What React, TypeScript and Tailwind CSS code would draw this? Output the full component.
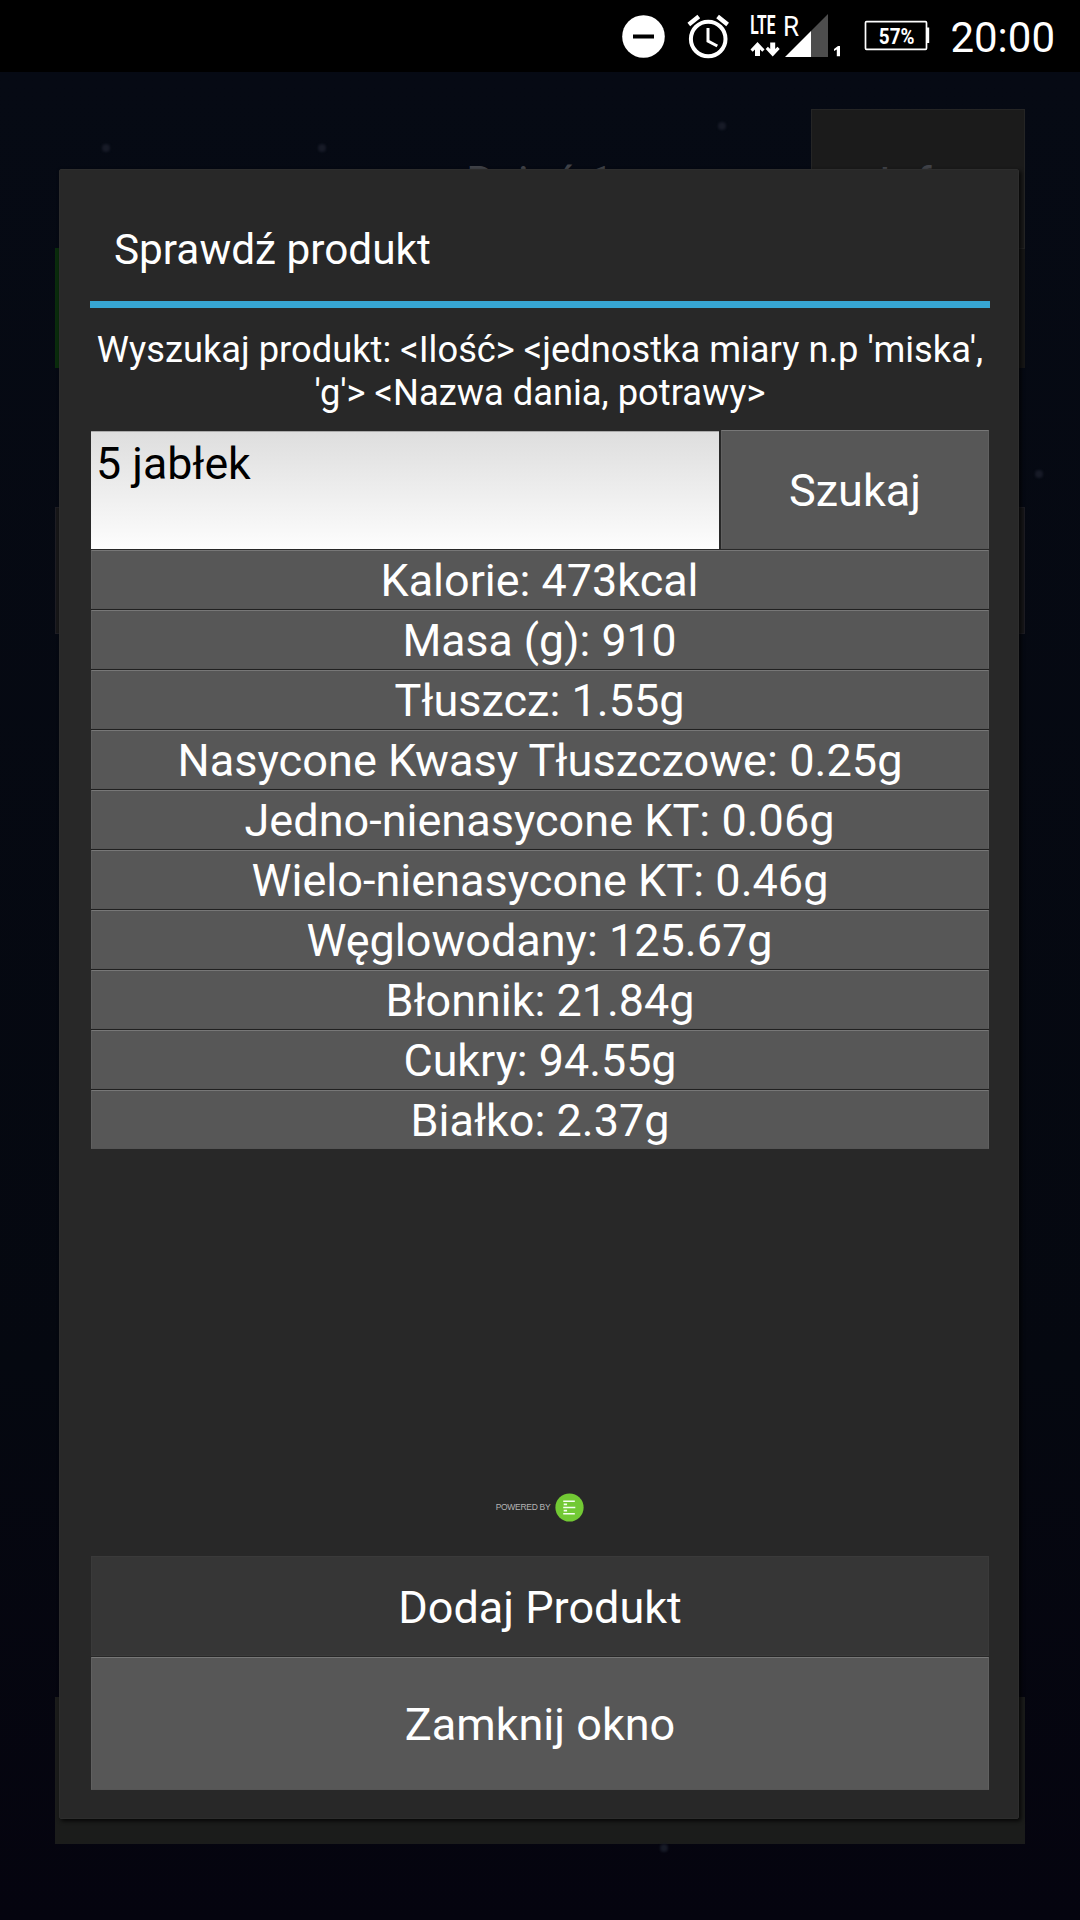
const nutrients = [
  { text: "Kalorie: 473kcal", w: 318 },
  { text: "Masa (g): 910", w: 274 },
  { text: "Tłuszcz: 1.55g", w: 290 },
  { text: "Nasycone Kwasy Tłuszczowe: 0.25g", w: 725 },
  { text: "Jedno-nienasycone KT: 0.06g", w: 590 },
  { text: "Wielo-nienasycone KT: 0.46g", w: 577 },
  { text: "Węglowodany: 125.67g", w: 466 },
  { text: "Błonnik: 21.84g", w: 309 },
  { text: "Cukry: 94.55g", w: 273 },
  { text: "Białko: 2.37g", w: 259 },
];

function StatusBar() {
  return (
    <header className="flex h-[72px] items-start justify-end bg-black pr-[25px] text-white">
      <svg className="mr-[21px] h-[72px] w-[44px] shrink-0" viewBox="621 0 44 72">
        <circle cx="643.5" cy="36.5" r="21.3" fill="#fff" />
        <rect x="633" y="34.5" width="21" height="4" fill="#000" />
      </svg>
      <svg className="mr-[20px] h-[72px] w-[44px] shrink-0" viewBox="686 0 44 72" fill="none" stroke="#fff">
        <circle cx="708.2" cy="39" r="17.3" strokeWidth="4" />
        <path d="M688.8 24.5l10-8M727.6 24.5l-10-8" strokeWidth="4.4" />
        <path d="M708 28v13l9.3 5" strokeWidth="3" />
      </svg>
      <svg className="mr-[22px] h-[72px] w-[92px] shrink-0" viewBox="750 0 92 72" fill="#fff">
        <text transform="translate(750.3 33.7) scale(0.6 1)" fontFamily="Roboto" fontWeight="700" fontSize="26">LTE</text>
        <text transform="translate(783 35.7) scale(0.95 1)" fontFamily="Roboto" fontWeight="400" fontSize="27.5">R</text>
        <path d="M757.5 42l7 7.5-2.2 2.2-2.3-2.2v6.5h-5v-6.5l-2.3 2.2-2.2-2.2z" />
        <path d="M772.7 56.5l-7-7.5 2.2-2.2 2.3 2.2v-6.5h5v6.5l2.3-2.2 2.2 2.2z" />
        <path d="M811 31l17-17v43h-17z" fill="#4d4d4d" />
        <path d="M785 57l26-26v26z" />
        <path d="M834 49l4-3h2v10.3h-3.2V49.5l-2.8 1.6z" />
      </svg>
      <svg className="mr-[20px] h-[72px] w-[66px] shrink-0" viewBox="864 0 66 72" fill="#fff">
        <rect x="865.5" y="21.7" width="61" height="27.6" rx="1" fill="none" stroke="#fff" strokeWidth="1.7" />
        <path d="M926.5 27.5h2.7v15.5h-2.7z" />
        <text transform="translate(878.8 43.7) scale(0.84 1)" fontFamily="Roboto" fontWeight="700" fontSize="22.5">57%</text>
      </svg>
      <span className="mt-[13px] text-[42px] leading-[50px]">20:00</span>
    </header>
  );
}

function DimmedPage() {
  return (
    <main className="flex h-[1848px] flex-col bg-linear-to-b from-[#060a14] via-[#050810] via-70% to-[#05040f] px-[55px] pt-[37px] text-[45px] text-[#404248]">
      <div className="grid h-[139px] grid-cols-[214px_1fr_214px]">
        <span />
        <span className="pt-[47px] text-center leading-[54px]">Dzień 1</span>
        <span className="border border-b-0 border-[#252525] bg-[#1b1b1b] pt-[47px] text-center leading-[54px]">Info</span>
      </div>
      <div className="flex h-[120px] justify-between">
        <span className="w-1/2 bg-[#0a2c0c]" />
        <span className="w-1/2 border-t border-[#252525] bg-[#171717]" />
      </div>
      <div className="mt-[139px] h-[127px] border border-[#1e1d23] bg-[#171719]" />
      <div className="mt-[1063px] h-[147px] bg-[#1b1c1b]" />
    </main>
  );
}

function Star({ className }: { className: string }) {
  return <i className={`absolute size-[8px] rounded-full bg-[#171b27] blur-[1px] ${className}`} />;
}

/** Single line stretched to a fixed advance width, centred in its parent. */
function Label({ text, w, h = 58 }: { text: string; w: number; h?: number }) {
  return (
    <svg width={w} height={h} className="overflow-visible" fill="currentColor">
      <text x="-0.5" y={h / 2 + 16} textLength={w} lengthAdjust="spacingAndGlyphs">
        {text}
      </text>
    </svg>
  );
}

const raised =
  "flex items-center justify-center border border-[#606060] border-t-[#777] border-b-[#555] bg-[#575757] text-[45px] text-white";

export default function App() {
  return (
    <div className="relative h-[1920px] w-[1080px] overflow-hidden bg-black font-['Roboto',sans-serif]">
      <StatusBar />
      <DimmedPage />
      <Star className="left-[102px] top-[144px]" />
      <Star className="left-[318px] top-[144px]" />
      <Star className="left-[718px] top-[122px]" />
      <Star className="left-[1035px] top-[470px]" />
      <Star className="left-[660px] top-[1844px]" />

      <section className="absolute left-[59px] top-[169px] flex h-[1650px] w-[960px] flex-col rounded-[2px] border border-[#2d2d2d] bg-[#282828] pl-[30px] pr-[28px] text-white shadow-[2px_2px_4px_0px_rgba(0,0,0,0.8)]">
        <h1 className="flex h-[131px] items-center pl-[24px] pt-[29px] text-[42.3px]">Sprawdź produkt</h1>
        <div className="h-[7px] shrink-0 bg-[#37a6d3]" />
        <p className="mt-[20px] h-[102px] whitespace-nowrap text-center text-[36.3px] leading-[43px]">
          Wyszukaj produkt: &lt;Ilość&gt; &lt;jednostka miary n.p 'miska',
          <br />
          'g'&gt; &lt;Nazwa dania, potrawy&gt;
        </p>
        <div className="mx-[1px] flex h-[119px] shrink-0 gap-[2px]">
          <div className="mt-[1px] h-[118px] w-[628px] border-t border-[#aaa] bg-linear-to-b from-[#dedede] to-[#fdfdfd] pl-[5px] pt-[6px] text-[44.7px] leading-[53px] text-black">
            5 jabłek
          </div>
          <button className={`${raised} h-[119px] flex-1 pt-[2px]`}>Szukaj</button>
        </div>
        <ul className="mx-[1px] mt-[1px] flex flex-col gap-[1px] bg-[#202020]">
          {nutrients.map((n) => (
            <li key={n.text} className={`${raised} h-[59px]`}>
              <Label text={n.text} w={n.w} />
            </li>
          ))}
        </ul>
        <div className="mt-[342px] flex h-[32px] items-center justify-center gap-[5px] font-['Liberation_Sans',sans-serif] text-[8.5px] text-[#b5b5b5]">
          <span className="tracking-[-0.3px]">POWERED BY</span>
          <svg className="size-[29px]" viewBox="0 0 30 30">
            <circle cx="15" cy="15" r="14.6" fill="#72c934" />
            <path d="M8.5 8.5h12M9 11.7h3.5M8.5 15h12.5M9 18.2h3.5M8.5 21.5h12" stroke="#f4fff0" strokeWidth="1.7" />
          </svg>
        </div>
        <div className="mx-[1px] mt-auto mb-[28px] flex shrink-0 flex-col gap-[1px]">
          <button className="h-[100px] border border-[#3a3a3a] bg-[#363636] pt-[4px] text-[45px]">Dodaj Produkt</button>
          <button className={`${raised} h-[133px] pt-[2px]`}>Zamknij okno</button>
        </div>
      </section>
    </div>
  );
}
